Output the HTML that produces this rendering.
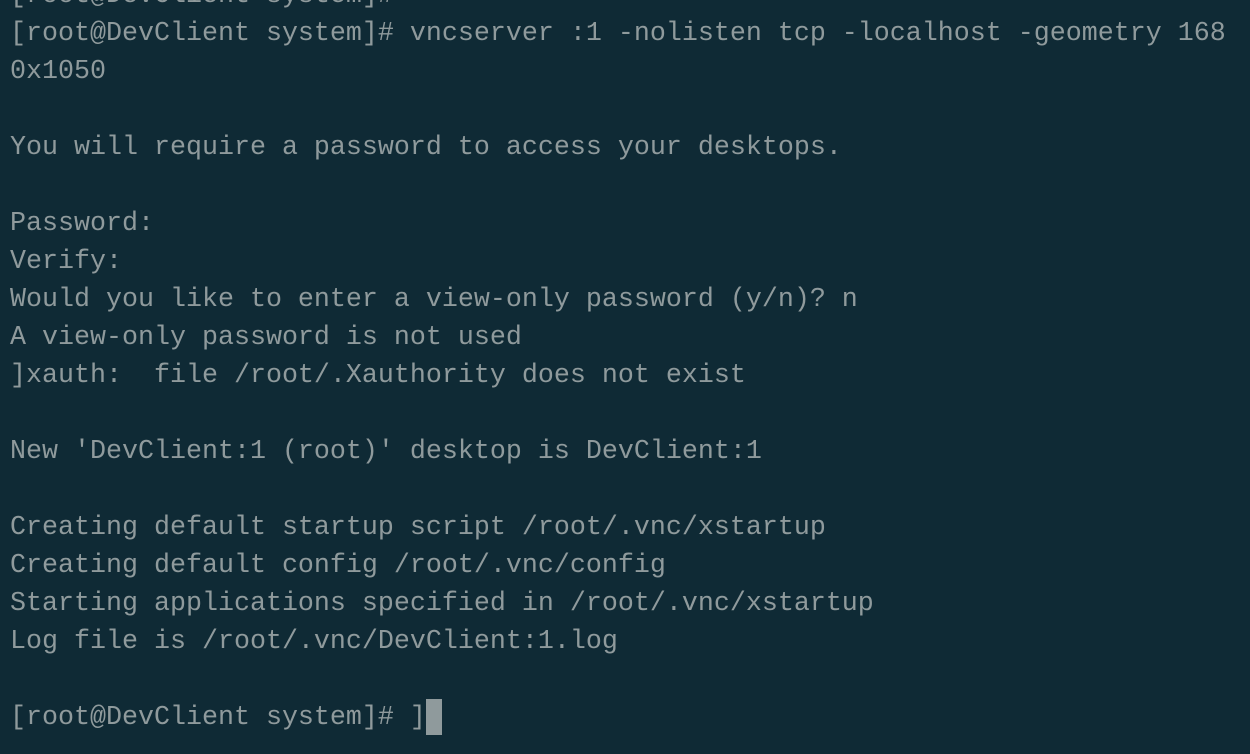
<!DOCTYPE html>
<html><head><style>
html,body{margin:0;padding:0;width:1250px;height:754px;overflow:hidden;background:#0f2a35;}
pre{position:absolute;left:10px;top:-23px;margin:0;font-family:"Liberation Mono",monospace;font-size:26.67px;line-height:38px;color:#8f9a9c;}
.c{display:inline-block;width:16px;height:36px;background:#8f9a9c;vertical-align:top;margin-top:0px;}
</style></head><body>
<pre>[root@DevClient system]#
[root@DevClient system]# vncserver :1 -nolisten tcp -localhost -geometry 168
0x1050

You will require a password to access your desktops.

Password:
Verify:
Would you like to enter a view-only password (y/n)? n
A view-only password is not used
]xauth:  file /root/.Xauthority does not exist

New 'DevClient:1 (root)' desktop is DevClient:1

Creating default startup script /root/.vnc/xstartup
Creating default config /root/.vnc/config
Starting applications specified in /root/.vnc/xstartup
Log file is /root/.vnc/DevClient:1.log

[root@DevClient system]# ]<span class="c"></span></pre>
</body></html>
